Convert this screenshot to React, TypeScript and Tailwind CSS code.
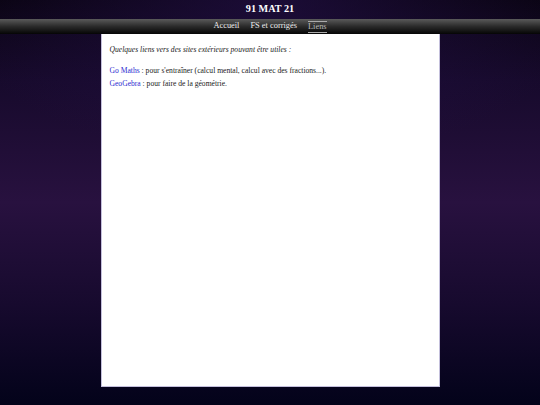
export default function App() {
  return (
    <div className="min-h-[405px] w-full flex flex-col bg-[radial-gradient(ellipse_60%_40%_at_50%_0%,rgba(40,18,80,0.6),transparent),linear-gradient(to_bottom,#08030f_0%,#170a2c_20%,#28113f_50%,#170a2e_75%,#03031a_100%)] font-['Liberation_Serif',serif]">
      {/* titre */}
      <div className="h-[19px] flex items-center justify-center">
        <h1 className="text-[10.2px] font-bold text-white leading-none">91 MAT 21</h1>
      </div>
      {/* menu */}
      <nav className="h-[15px] flex items-center justify-center gap-[11px] bg-[linear-gradient(to_bottom,#5a5a5a,#2a2a2a_50%,#050505)] text-[8.4px] text-[#ececec]">
        <span>Accueil</span>
        <span>FS et corrigés</span>
        <span className="text-[#bbbbbb] border-t border-b border-[#aaaaaa] leading-[10px]">Liens</span>
      </nav>
      {/* contenu */}
      <div className="flex justify-center">
        <div className="w-[339px] h-[353px] bg-white border border-[#c4c0dc] border-t-0 px-[8px] pt-[10px] text-[7.6px] leading-[11px] text-[#222]">
          <p className="italic">Quelques liens vers des sites extérieurs pouvant être utiles :</p>
          <p className="mt-[10px]">
            <span className="text-[#2a2ad0]">Go Maths</span> : pour s'entraîner (calcul mental, calcul avec des fractions...).
          </p>
          <p className="mt-[2px]">
            <span className="text-[#2a2ad0]">GeoGebra</span> : pour faire de la géométrie.
          </p>
        </div>
      </div>
    </div>
  );
}
